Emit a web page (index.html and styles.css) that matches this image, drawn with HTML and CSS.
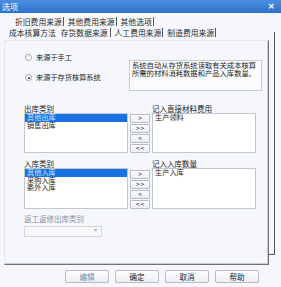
FILE: index.html
```html
<!DOCTYPE html>
<html lang="zh">
<head>
    <meta charset="UTF-8">
    <title>选项</title>
    <link rel="stylesheet" href="styles.css">
</head>
<body>
    <div class="dialog">
        <div class="titlebar">
            <span class="title">选项</span>
            <span class="close">×</span>
        </div>
        <div class="tabs">
            <div class="tab-row back">
                <span class="tab">折旧费用来源</span>
                <span class="tab">其他费用来源</span>
                <span class="tab">其他选项</span>
            </div>
            <div class="tab-row front">
                <span class="tab plain">成本核算方法</span>
                <span class="tab active">存货数据来源</span>
                <span class="tab">人工费用来源</span>
                <span class="tab">制造费用来源</span>
            </div>
        </div>
        <div class="panel">
            <div class="source">
                <div class="radios">
                    <div class="radio"><span class="circle"></span>来源于手工</div>
                    <div class="radio checked"><span class="circle"></span>来源于存货核算系统</div>
                </div>
                <div class="note">系统自动从存货系统读取有关成本核算<br>所需的材料消耗数据和产品入库数量。</div>
            </div>

            <div class="transfer">
                <div class="caption">出库类别</div>
                <div></div>
                <div class="caption">记入直接材料费用</div>
                <ul class="list">
                    <li class="selected">其他出库</li>
                    <li>销售出库</li>
                </ul>
                <div class="moves">
                    <button>&gt;</button>
                    <button>&gt;&gt;</button>
                    <button>&lt;</button>
                    <button>&lt;&lt;</button>
                </div>
                <ul class="list">
                    <li>生产领料</li>
                </ul>
            </div>

            <div class="transfer second">
                <div class="caption">入库类别</div>
                <div></div>
                <div class="caption">记入入库数量</div>
                <ul class="list">
                    <li class="selected">其他入库</li>
                    <li>采购入库</li>
                    <li>委外入库</li>
                </ul>
                <div class="moves">
                    <button>&gt;</button>
                    <button>&gt;&gt;</button>
                    <button>&lt;</button>
                    <button>&lt;&lt;</button>
                </div>
                <ul class="list">
                    <li>生产入库</li>
                </ul>
            </div>

            <div class="caption muted">返工返修出库类别</div>
            <div class="combo"><span class="arrow">▾</span></div>
        </div>
        <div class="actions">
            <button class="btn" disabled>编辑</button>
            <button class="btn">确定</button>
            <button class="btn">取消</button>
            <button class="btn">帮助</button>
        </div>
    </div>
</body>
</html>
```

FILE: styles.css
```css
body {
    margin: 0;
    background: #f5f7fb;
    font-family: "Noto Sans CJK SC", "Liberation Sans", sans-serif;
    font-size: 7.5px;
    color: #222;
}
.dialog {
    width: 281px;
    height: 287px;
    background: #f5f7fb;
}
.titlebar {
    height: 13px;
    background: linear-gradient(#4a8fe0, #2f70c9);
    color: #fff;
    display: flex;
    align-items: center;
    justify-content: space-between;
    padding: 0 6px 0 2px;
    font-size: 8px;
    line-height: 13px;
}
.close {
    font-family: "DejaVu Sans", sans-serif;
    font-weight: bold;
    font-size: 9px;
}
.tabs {
    padding-top: 3px;
}
.tab-row {
    display: flex;
    height: 10px;
    line-height: 10px;
    font-size: 7.8px;
    color: #2a2a2a;
}
.tab-row.back {
    padding-left: 11px;
    margin-bottom: 1px;
}
.tab-row.front {
    padding-left: 5px;
}
.tab {
    padding: 0 1px 0 4px;
    border-right: 1px solid #555;
    height: 9px;
    line-height: 9px;
    margin-top: 1px;
}
.tab.plain {
    border-right: none;
    padding-right: 1px;
}
.tab.active {
    padding-left: 4px;
    padding-right: 2px;
}
.panel {
    position: relative;
    margin: 3px 0 0 4px;
    width: 265px;
    height: 225px;
    border-left: 1px solid #e6e9ef;
    border-top: 1px solid #e6e9ef;
    border-right: 1px solid #707070;
    border-bottom: 1px solid #707070;
    box-shadow: inset -1px -1px 0 #c8ccd4;
    padding: 12px 0 0 19px;
    box-sizing: border-box;
}
.panel::after {
    content: "";
    position: absolute;
    right: -7px;
    top: -9px;
    bottom: 9px;
    width: 6px;
    border-right: 1px solid #555;
    border-bottom: 1px solid #555;
}
.source {
    display: flex;
    height: 51px;
}
.radios {
    width: 105px;
}
.radio {
    display: flex;
    align-items: center;
    height: 9px;
    line-height: 9px;
    margin-bottom: 11px;
    padding-left: 1px;
    font-size: 7.2px;
}
.circle {
    width: 5px;
    height: 5px;
    border: 1px solid #9aa0a8;
    border-radius: 50%;
    background: #fff;
    margin-right: 4px;
    display: flex;
    align-items: center;
    justify-content: center;
}
.radio.checked .circle::after {
    content: "";
    width: 2px;
    height: 2px;
    border-radius: 50%;
    background: #333;
}
.note {
    margin-top: 7px;
    width: 133px;
    height: 31px;
    box-sizing: border-box;
    border: 1px solid #c5ccd8;
    background: #fbfcfe;
    padding: 1px 0 0 2px;
    font-size: 7.3px;
    line-height: 7.5px;
    white-space: nowrap;
    overflow: hidden;
}
.transfer {
    display: grid;
    grid-template-columns: 104px 24px 104px;
    grid-template-rows: 9px 40px;
}
.transfer.second {
    margin-top: 6px;
    grid-template-rows: 9px 41px;
}
.caption {
    height: 9px;
    line-height: 9px;
}
.caption.muted {
    margin-top: 5px;
    color: #8a8f96;
}
.list {
    list-style: none;
    margin: 0;
    padding: 0;
    background: #fff;
    border: 1px solid #c0c6d0;
    font-size: 7.2px;
    line-height: 7.5px;
}
.list li {
    padding-left: 2px;
    height: 7.5px;
}
.list li.selected {
    background: #1a72e2;
    color: #cfe3ff;
}
.moves {
    display: flex;
    flex-direction: column;
    gap: 1px;
    padding: 1px 0 0 2px;
}
.second .moves {
    padding-top: 2px;
}
.moves button {
    width: 20px;
    height: 9px;
    padding: 0;
    font-family: "DejaVu Sans", sans-serif;
    font-size: 5.5px;
    line-height: 7px;
    color: #333;
    background: linear-gradient(#fdfdfe, #e9edf3);
    border: 1px solid #b5bcc7;
    border-radius: 1px;
}
.combo {
    position: relative;
    margin-top: 3px;
    width: 78px;
    height: 11px;
    box-sizing: border-box;
    border: 1px solid #d2d6dc;
    background: #f8f9fb;
}
.arrow {
    position: absolute;
    right: 4px;
    top: -1px;
    font-size: 6px;
    color: #a8acb2;
    font-family: "DejaVu Sans", sans-serif;
}
.actions {
    display: flex;
    justify-content: flex-end;
    gap: 6px;
    padding: 5px 22px 0 0;
}
.btn {
    width: 44px;
    height: 13px;
    padding: 0;
    font-family: "Noto Sans CJK SC", sans-serif;
    font-size: 7.5px;
    color: #222;
    background: linear-gradient(#ffffff, #eceef2);
    border: 1px solid #b9bec6;
    border-radius: 2px;
}
.btn:disabled {
    color: #6f8fb2;
}
```
